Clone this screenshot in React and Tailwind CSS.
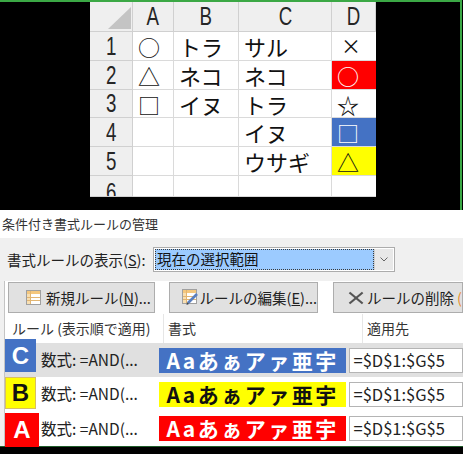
import React from "react";

const JP = { fontFamily: '"Noto Sans CJK JP", "Noto Sans", sans-serif' };

const cols = [43, 41, 65, 93, 44];
const rowHeights = [29, 29, 28, 29, 29, 21];
const rows = [
  ["1", "○", "トラ", "サル", { t: "×" }],
  ["2", "△", "ネコ", "ネコ", { t: "○", bg: "#ff0000", c: "#ffffff" }],
  ["3", "□", "イヌ", "トラ", { t: "☆" }],
  ["4", "", "", "イヌ", { t: "□", bg: "#4472c4", c: "#ffffff" }],
  ["5", "", "", "ウサギ", { t: "△", bg: "#ffff00", c: "#111111" }],
  ["6", "", "", "", { t: "" }],
];

function HeaderGlyph({ children }) {
  return (
    <span
      className="inline-block scale-x-[0.72] text-[26px] leading-none text-[#262626]"
      style={{ fontFamily: '"Liberation Sans", Arial, sans-serif' }}
    >
      {children}
    </span>
  );
}

function Sheet() {
  return (
    <div className="w-[286px] h-[197px] bg-white overflow-hidden ml-[90px] -mt-[2px] flex flex-col" style={JP}>
      <div className="flex h-[32px] shrink-0 bg-[#efefef]">
        <div className="w-[43px] h-full border-r border-b border-[#d0d0d0] relative">
          <svg width="43" height="32" className="absolute left-0 top-0">
            <polygon points="18,29 41,7 41,29" fill="#c4c4c4" />
          </svg>
        </div>
        {["A", "B", "C", "D"].map((l, i) => (
          <div
            key={l}
            className="h-full border-r border-b border-[#d0d0d0] flex items-center justify-center"
            style={{ width: cols[i + 1] }}
          >
            <HeaderGlyph>{l}</HeaderGlyph>
          </div>
        ))}
      </div>
      {rows.map((r, ri) => (
        <div key={ri} className="flex shrink-0" style={{ height: rowHeights[ri] }}>
          <div className="w-[43px] h-full bg-[#efefef] border-r border-b border-[#d0d0d0] flex items-center justify-center overflow-hidden">
            <span className={ri === 5 ? "mt-[12px]" : ""}>
              <HeaderGlyph>{r[0]}</HeaderGlyph>
            </span>
          </div>
          {[1, 2, 3].map((ci) => (
            <div
              key={ci}
              className="h-full border-r border-b border-[#dadada] flex items-center pl-[5px] text-[22px] leading-none text-[#111]"
              style={{ width: cols[ci] }}
            >
              {r[ci]}
            </div>
          ))}
          <div
            className="h-full border-b border-[#dadada] flex items-center pl-[5px] text-[22px] leading-none"
            style={{ width: cols[4], backgroundColor: r[4].bg || "#ffffff", color: r[4].c || "#111" }}
          >
            {r[4].t === "×" ? <span className="pl-[4px] text-[20px]">×</span> : r[4].t}
          </div>
        </div>
      ))}
    </div>
  );
}

function NewIcon() {
  return (
    <svg width="15" height="15" viewBox="0 0 15 15">
      <rect x="0.5" y="0.5" width="14" height="14" fill="#fff" stroke="#a0a0a0" />
      <rect x="1" y="1" width="13" height="3" fill="#f4c77e" />
      <rect x="1" y="4" width="3" height="10" fill="#f8dfb2" />
      <line x1="1" y1="7.5" x2="14" y2="7.5" stroke="#e2b572" />
      <line x1="1" y1="10.5" x2="14" y2="10.5" stroke="#e2b572" />
      <line x1="4.5" y1="1" x2="4.5" y2="14" stroke="#e2b572" />
    </svg>
  );
}

function EditIcon() {
  return (
    <svg width="17" height="17" viewBox="0 0 17 17">
      <rect x="0.5" y="0.5" width="14" height="14" fill="#fff" stroke="#a0a0a0" />
      <rect x="1" y="1" width="13" height="3" fill="#f4c77e" />
      <rect x="1" y="4" width="3" height="10" fill="#f8dfb2" />
      <line x1="1" y1="7.5" x2="14" y2="7.5" stroke="#e2b572" />
      <line x1="1" y1="10.5" x2="14" y2="10.5" stroke="#e2b572" />
      <line x1="4.5" y1="1" x2="4.5" y2="14" stroke="#e2b572" />
      <line x1="15" y1="5" x2="6" y2="14" stroke="#5a7fbf" strokeWidth="2.6" />
      <polygon points="4.5,16 5,13 7,15" fill="#444" />
    </svg>
  );
}

function DelIcon() {
  return (
    <svg width="22" height="18" viewBox="0 0 22 18">
      <line x1="2" y1="1.5" x2="20" y2="16.5" stroke="#555" strokeWidth="3" />
      <line x1="20" y1="1.5" x2="2" y2="16.5" stroke="#555" strokeWidth="3" />
    </svg>
  );
}

function Preview({ bg, color }) {
  return (
    <div
      className="w-[187px] h-[25px] ml-[1px] flex items-center justify-center text-[21px] font-semibold tracking-[2.5px] leading-none"
      style={{ backgroundColor: bg, color }}
    >
      Aaあぁアァ亜宇
    </div>
  );
}

function AppliesBox() {
  return (
    <div className="ml-[1px] h-[25px] w-[120px] bg-white border border-[#b4b4b4] flex items-center pl-[4px] text-[16.5px] text-[#222] whitespace-nowrap">
      =$D$1:$G$5
    </div>
  );
}

function RuleRow({ letter, badgeBg, badgeColor, badgeClass, rowBg, height, preview, previewColor }) {
  return (
    <div className="relative flex items-center shrink-0" style={{ height, backgroundColor: rowBg }}>
      <div className={`absolute left-0 flex items-center justify-center font-bold text-[24px] leading-none ${badgeClass}`} style={{ backgroundColor: badgeBg, color: badgeColor, fontFamily: '"Liberation Sans", Arial, sans-serif' }}>
        {letter}
      </div>
      <div className="w-[159px] pl-[36px] text-[15.5px] text-[#222] whitespace-nowrap">数式: =AND(...</div>
      <div className="w-[199px]">
        <Preview bg={preview} color={previewColor} />
      </div>
      <AppliesBox />
    </div>
  );
}

export default function App() {
  return (
    <div className="w-[463px] h-[454px] bg-black overflow-hidden flex flex-col" style={JP}>
      <div className="h-[210px] shrink-0 w-[462px] border-t-2 border-r-2 border-[#3ba845] overflow-hidden">
        <Sheet />
      </div>
      <div className="h-[28px] shrink-0 bg-white flex items-center pl-[2px] text-[13px] text-[#333]">
        条件付き書式ルールの管理
      </div>
      <div className="h-[43px] shrink-0 bg-[#f0f0f0] flex items-center text-[14.5px] text-[#222]">
        <div className="w-[153px] pl-[7px] whitespace-nowrap">
          書式ルールの表示(<span className="underline">S</span>):
        </div>
        <div className="w-[242px] h-[25px] border border-[#acacac] bg-white flex p-[1px]">
          <div className="flex-1 bg-[#9ccbff] border border-dotted border-[#3a3a3a] flex items-center pl-[1px] text-[14.5px] text-[#111] leading-none">
            現在の選択範囲
          </div>
          <div className="w-[19px] bg-[#e8e8e8] border-l border-[#cfcfcf] flex items-center justify-center">
            <svg width="8" height="5" viewBox="0 0 8 5">
              <polyline points="0.5,0.5 4,4 7.5,0.5" fill="none" stroke="#666" />
            </svg>
          </div>
        </div>
      </div>
      <div className="flex-1 bg-[#f0f0f0] flex flex-col">
        <div className="ml-[4px] flex-1 bg-white border-l border-[#c4c4c4] flex flex-col">
          <div className="h-[33px] shrink-0 flex items-start pt-[1px] text-[14.5px] text-[#222] whitespace-nowrap">
            <div className="ml-[3px] w-[156px] h-[31px] bg-[#e1e1e1] border border-[#adadad] flex items-center pl-[17px] gap-[5px]">
              <NewIcon />
              <span>
                新規ルール(<span className="underline">N</span>)...
              </span>
            </div>
            <div className="ml-[14px] w-[155px] h-[31px] bg-[#e1e1e1] border border-[#adadad] flex items-center pl-[12px] gap-[1px]">
              <EditIcon />
              <span>
                ルールの編集(<span className="underline">E</span>)...
              </span>
            </div>
            <div className="ml-[15px] w-[130px] h-[31px] bg-[#e1e1e1] border border-[#adadad] flex items-center pl-[14px] gap-[3px]">
              <DelIcon />
              <span>ルールの削除</span>
              <span className="text-[#e8912c]">(</span>
            </div>
          </div>
          <div className="h-[29px] shrink-0 flex items-center text-[14px] text-[#333] whitespace-nowrap">
            <div className="w-[159px] h-full pl-[7px] flex items-center border-r border-[#e6e6e6]">ルール (表示順で適用)</div>
            <div className="w-[199px] h-full pl-[4px] flex items-center border-r border-[#e6e6e6]">書式</div>
            <div className="pl-[4px]">適用先</div>
          </div>
          <RuleRow letter="C" badgeBg="#4472c4" badgeColor="#fff" badgeClass="top-[-4px] w-[31px] h-[33px]" rowBg="#e0e0e0" height={34} preview="#4472c4" previewColor="#fff" />
          <RuleRow letter="B" badgeBg="#ffff00" badgeColor="#111" badgeClass="top-0 w-[31px] h-[32px] border border-[#d8c060]" rowBg="#ffffff" height={34} preview="#ffff00" previewColor="#111" />
          <RuleRow letter="A" badgeBg="#ff0000" badgeColor="#fff" badgeClass="top-[2px] w-[34px] h-[34px] z-10" rowBg="#ffffff" height={35} preview="#ff0000" previewColor="#fff" />
        </div>
      </div>
      <div className="h-[8px] shrink-0 bg-black border-t border-[#1f5c2a]" />
    </div>
  );
}
